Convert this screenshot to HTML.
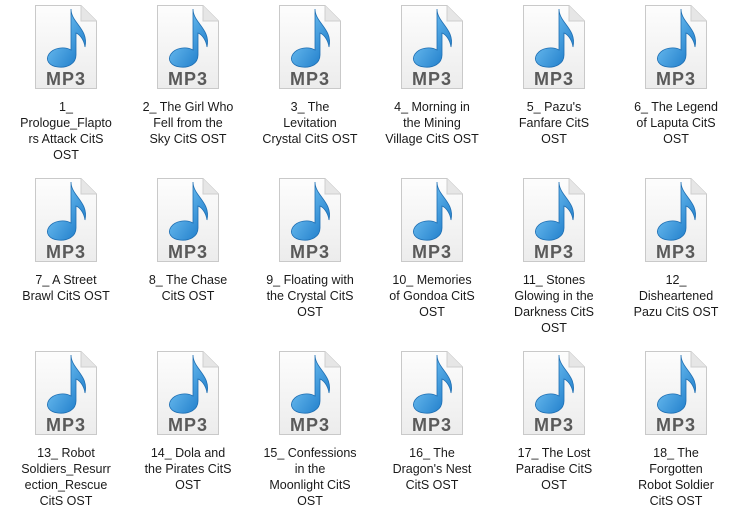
<!DOCTYPE html><html><head><meta charset="utf-8"><style>
body{margin:0;width:740px;height:513px;background:#fff;overflow:hidden;font-family:"Liberation Sans",sans-serif;}
.c{position:absolute;width:122px;text-align:center;}
.c svg{display:block;margin:0 auto;}
.t{font-size:12.5px;line-height:16px;color:#1a1a1a;margin-top:8px;white-space:nowrap;}
</style></head><body>
<svg width="0" height="0" style="position:absolute"><defs>
<linearGradient id="pg" x1="0" y1="0" x2="0" y2="1"><stop offset="0" stop-color="#fdfdfd"/><stop offset="1" stop-color="#ececec"/></linearGradient>
<linearGradient id="nt" x1="0" y1="0" x2="1" y2="1"><stop offset="0" stop-color="#8ad6ff"/><stop offset="1" stop-color="#1373c4"/></linearGradient>
</defs></svg>
<div id="g"></div>
<script>
var n=["1_|Prologue_Flapto|rs Attack CitS|OST","2_ The Girl Who|Fell from the|Sky CitS OST","3_ The|Levitation|Crystal CitS OST","4_ Morning in|the Mining|Village CitS OST","5_ Pazu's|Fanfare CitS|OST","6_ The Legend|of Laputa CitS|OST","7_ A Street|Brawl CitS OST","8_ The Chase|CitS OST","9_ Floating with|the Crystal CitS|OST","10_ Memories|of Gondoa CitS|OST","11_ Stones|Glowing in the|Darkness CitS|OST","12_|Disheartened|Pazu CitS OST","13_ Robot|Soldiers_Resurr|ection_Rescue|CitS OST","14_ Dola and|the Pirates CitS|OST","15_ Confessions|in the|Moonlight CitS|OST","16_ The|Dragon's Nest|CitS OST","17_ The Lost|Paradise CitS|OST","18_ The|Forgotten|Robot Soldier|CitS OST"];
var ic='<svg width="66" height="88" viewBox="0 0 66 88"><path d="M2.5 2.5H48L63.5 18V85.5H2.5Z" fill="url(#pg)" stroke="#c9c9c9"/><path d="M48 2.5V18H63.5" fill="#e6e6e6" stroke="#cfcfcf"/><path d="M38 6C38 20 56 26 52 44C51 36 46 31 43 30V52C43 61 34 65 25 64C16 63 12 57 16 51C20 45 31 43 38 47Z" fill="url(#nt)" stroke="#1f6fb3" stroke-width="0.8"/><text x="33" y="82" text-anchor="middle" font-family="Liberation Sans" font-weight="bold" font-size="18" fill="#5a5a5a" letter-spacing="1">MP3</text></svg>';
var h='';
for(var i=0;i<18;i++){var r=Math.floor(i/6),c=i%6;
h+='<div class="c" style="left:'+(5+c*122)+'px;top:'+(3+r*173)+'px">'+ic+'<div class="t">'+n[i].split('|').join('<br>')+'</div></div>';}
document.getElementById('g').innerHTML=h;
</script>
</body></html>
